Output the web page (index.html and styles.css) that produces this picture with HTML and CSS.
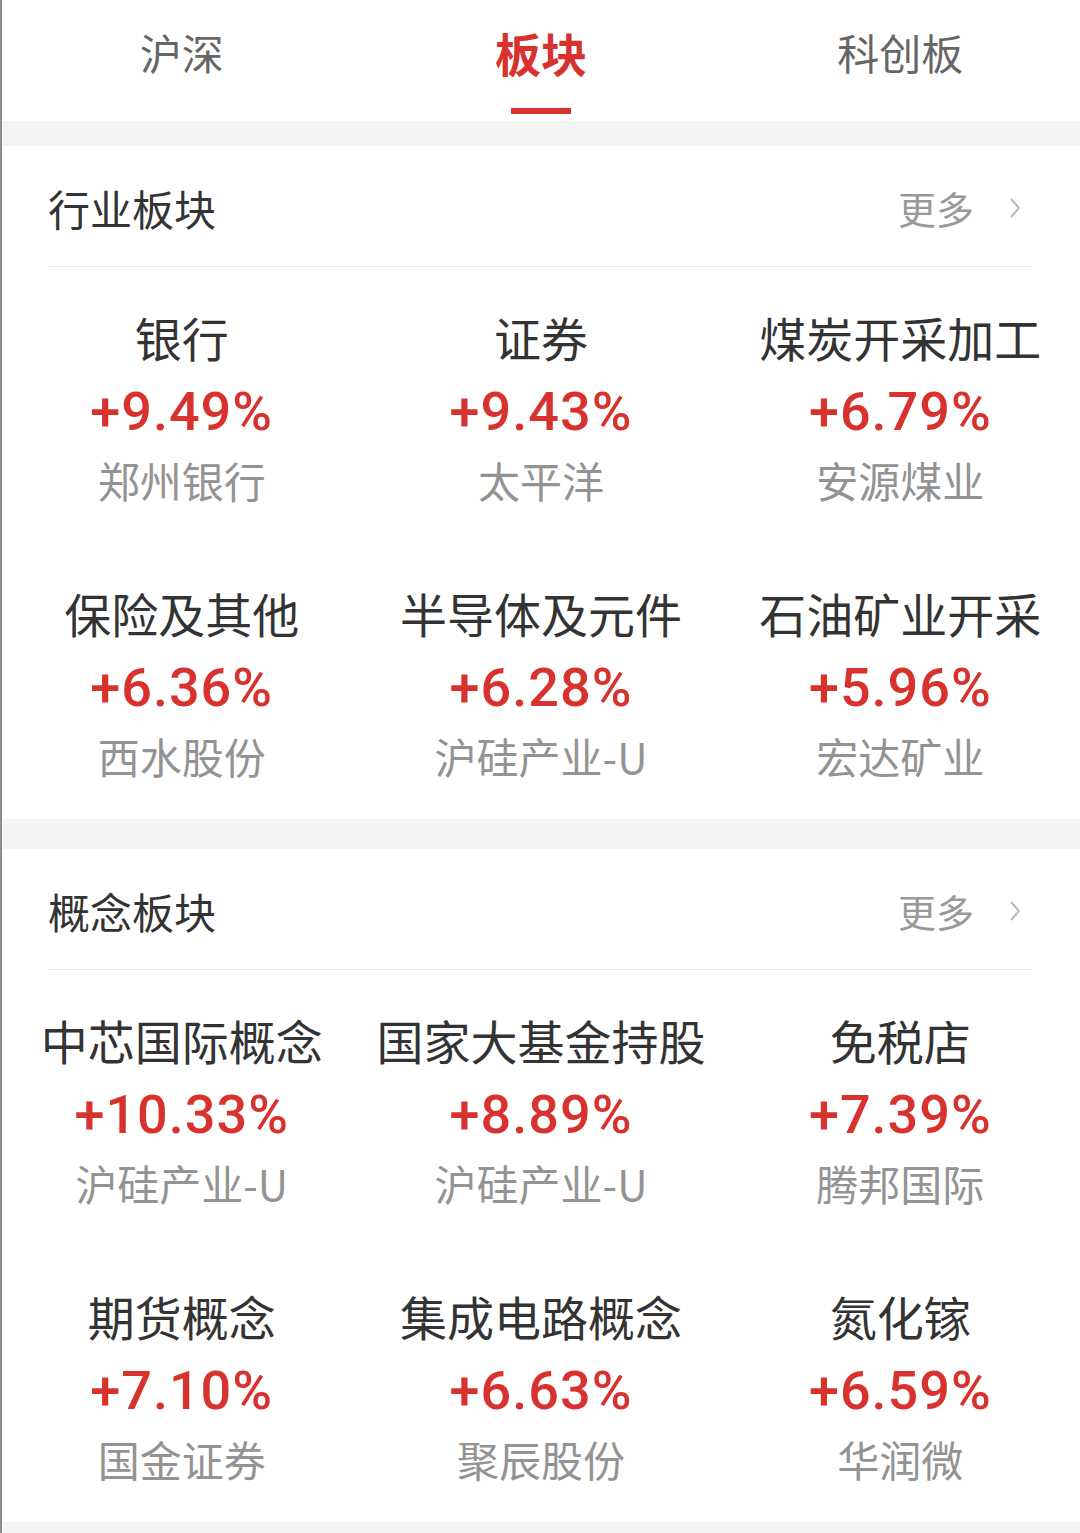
FILE: index.html
```html
<!DOCTYPE html>
<html lang="zh-CN">
  <head>
    <meta charset="UTF-8" />
    <title>板块</title>
    <meta name="viewport" content="width=device-width, initial-scale=1.0" />
    <link rel="stylesheet" href="styles.css">
  </head>
  <body>
    <div class="page">
      <div class="tabs">
        <div class="tab">沪深</div>
        <div class="tab active">板块<span class="tab-bar"></span></div>
        <div class="tab">科创板</div>
      </div>

      <div class="gap"></div>

      <div class="section">
        <div class="section-head">
          <div class="section-title">行业板块</div>
          <div class="more">
            更多
            <svg class="chevron" width="14" height="24" viewBox="0 0 14 24">
              <polyline points="3,3 11,12 3,21" fill="none" stroke="#bbb" stroke-width="2" />
            </svg>
          </div>
        </div>
        <div class="grid">
          <div class="cell"><div class="name">银行</div><div class="pct">+9.49%</div><div class="stock">郑州银行</div></div>
          <div class="cell"><div class="name">证券</div><div class="pct">+9.43%</div><div class="stock">太平洋</div></div>
          <div class="cell"><div class="name">煤炭开采加工</div><div class="pct">+6.79%</div><div class="stock">安源煤业</div></div>
          <div class="cell"><div class="name">保险及其他</div><div class="pct">+6.36%</div><div class="stock">西水股份</div></div>
          <div class="cell"><div class="name">半导体及元件</div><div class="pct">+6.28%</div><div class="stock">沪硅产业-U</div></div>
          <div class="cell"><div class="name">石油矿业开采</div><div class="pct">+5.96%</div><div class="stock">宏达矿业</div></div>
        </div>
      </div>

      <div class="gap"></div>

      <div class="section">
        <div class="section-head">
          <div class="section-title">概念板块</div>
          <div class="more">
            更多
            <svg class="chevron" width="14" height="24" viewBox="0 0 14 24">
              <polyline points="3,3 11,12 3,21" fill="none" stroke="#bbb" stroke-width="2" />
            </svg>
          </div>
        </div>
        <div class="grid">
          <div class="cell"><div class="name">中芯国际概念</div><div class="pct">+10.33%</div><div class="stock">沪硅产业-U</div></div>
          <div class="cell"><div class="name">国家大基金持股</div><div class="pct">+8.89%</div><div class="stock">沪硅产业-U</div></div>
          <div class="cell"><div class="name">免税店</div><div class="pct">+7.39%</div><div class="stock">腾邦国际</div></div>
          <div class="cell"><div class="name">期货概念</div><div class="pct">+7.10%</div><div class="stock">国金证券</div></div>
          <div class="cell"><div class="name">集成电路概念</div><div class="pct">+6.63%</div><div class="stock">聚辰股份</div></div>
          <div class="cell"><div class="name">氮化镓</div><div class="pct">+6.59%</div><div class="stock">华润微</div></div>
        </div>
      </div>

      <div class="gap"></div>
    </div>
  </body>
</html>
```

FILE: styles.css
```css
body {
  margin: 0;
  background: #fff;
  font-family: "Noto Sans CJK SC", "Noto Sans", sans-serif;
  color: #333;
}

.page {
  border-left: 2px solid #8c8c8c;
  min-height: 1533px;
  box-sizing: border-box;
}

.tabs {
  display: flex;
  height: 122px;
  border-bottom: 1px solid #f2f2f2;
  box-sizing: border-box;
}

.tab {
  flex: 1;
  display: flex;
  flex-direction: column;
  align-items: center;
  padding-top: 22px;
  font-size: 42px;
  line-height: 60px;
  color: #666;
}

.tab.active {
  color: #d8322f;
  font-weight: bold;
  font-size: 46px;
}

.tab-bar {
  display: block;
  width: 60px;
  height: 6px;
  margin-top: 26px;
  background: #d8322f;
}

.gap {
  height: 24px;
  background: #f4f4f4;
}

.section + .gap {
  height: 30px;
}

.section {
  background: #fff;
}

.section-head {
  display: flex;
  justify-content: space-between;
  align-items: center;
  margin: 0 48px 0 46px;
  padding: 40px 0 36px;
  border-bottom: 1px solid #e8e8e8;
}

.section-title {
  font-size: 42px;
  line-height: 44px;
}

.more {
  display: flex;
  align-items: center;
  font-size: 38px;
  line-height: 44px;
  color: #999;
}

.chevron {
  margin-left: 34px;
  margin-right: 10px;
}

.grid {
  display: grid;
  grid-template-columns: repeat(3, 1fr);
}

.cell {
  height: 276px;
  padding-top: 40px;
  box-sizing: border-box;
  text-align: center;
  white-space: nowrap;
}

.name {
  font-size: 47px;
  line-height: 60px;
  color: #333;
}

.pct {
  font-family: Roboto, "Liberation Sans", sans-serif;
  font-weight: 500;
  font-size: 54px;
  letter-spacing: 1px;
  line-height: 90px;
  color: #d8322f;
}

.stock {
  font-size: 42px;
  line-height: 46px;
  padding-bottom: 2px;
  color: #939393;
}
```
